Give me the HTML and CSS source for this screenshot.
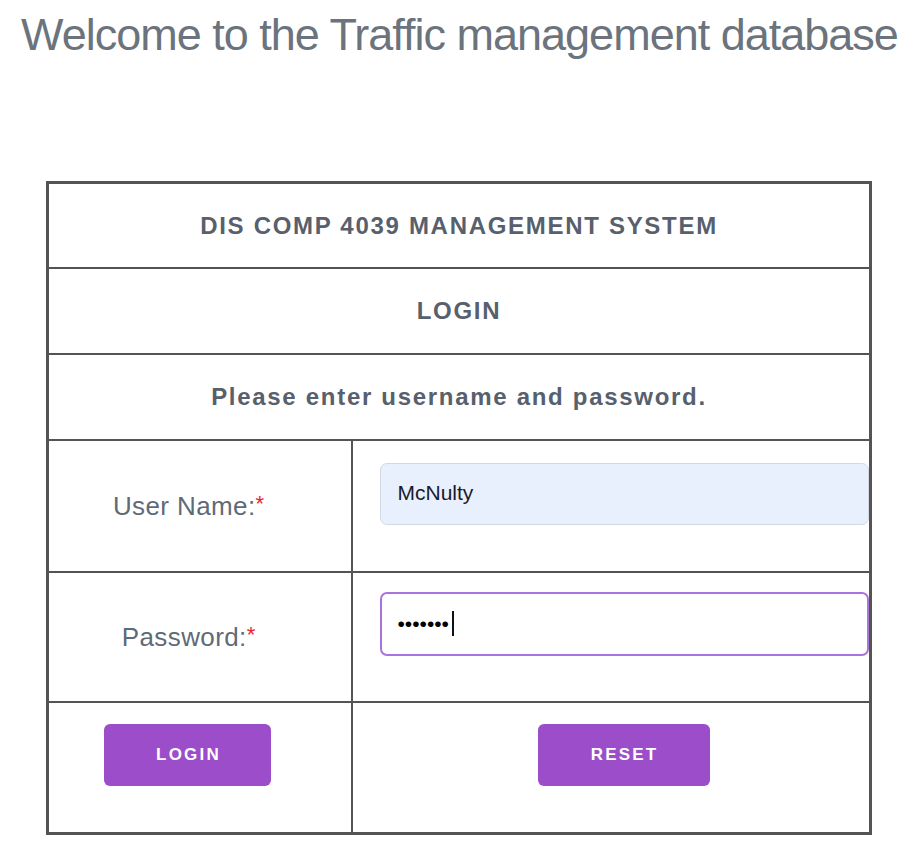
FILE: index.html
```html
<!DOCTYPE html>
<html lang="en">
<head>
<meta charset="utf-8">
<title>Traffic management database</title>
<link rel="stylesheet" href="styles.css">
</head>
<body>
<h1 class="title">Welcome to the Traffic management database</h1>
<form class="login-form">
<table class="login-table">
  <tr class="r1"><td colspan="2" class="head">DIS COMP 4039 MANAGEMENT SYSTEM</td></tr>
  <tr class="r2"><td colspan="2" class="head">LOGIN</td></tr>
  <tr class="r3"><td colspan="2" class="head">Please enter username and password.</td></tr>
  <tr class="field-row">
    <td class="label">User Name:<span class="req">*</span></td>
    <td class="field"><input class="input autofill" type="text" value="McNulty"></td>
  </tr>
  <tr class="field-row pw-row">
    <td class="label">Password:<span class="req">*</span></td>
    <td class="field"><div class="input-wrap"><input class="input focused" type="password" value="McNulty"><span class="caret"></span></div></td>
  </tr>
  <tr class="btn-row">
    <td class="btn-cell left"><button type="button" class="btn">LOGIN</button></td>
    <td class="btn-cell right"><button type="reset" class="btn">RESET</button></td>
  </tr>
</table>
</form>
</body>
</html>
```
FILE: styles.css
```css
html, body {
  margin: 0;
  padding: 0;
  background: #ffffff;
}
body {
  font-family: "Liberation Sans", Arial, sans-serif;
  padding-top: 12px;
}
.title {
  margin: 0 0 124px 21px;
  font-size: 45px;
  line-height: 45px;
  font-weight: normal;
  letter-spacing: -1px;
  color: #6b737d;
  white-space: nowrap;
}
.login-form {
  margin: 0 0 0 46px;
}
.login-table {
  border-collapse: collapse;
  width: 826px;
  border: 3px solid #545454;
}
.login-table td {
  border: 2px solid #545454;
  padding: 0;
}
.head {
  text-align: center;
  vertical-align: middle;
  font-weight: bold;
  font-size: 24px;
  letter-spacing: 1.7px;
  color: #57606c;
}
.r1 .head { height: 83px; }
.r2 .head { height: 84px; }
.r3 .head { height: 84px; }
.label {
  width: 304px;
  height: 132px;
  text-align: center;
  vertical-align: middle;
  font-size: 26px;
  letter-spacing: 0.4px;
  color: #5f6a77;
  padding-right: 22px !important;
  box-sizing: border-box;
}
.pw-row .label { height: 130px; }
.req {
  color: #e8262f;
  font-size: 22px;
  vertical-align: 4px;
}
.field {
  vertical-align: top;
  padding: 22px 0 0 27px !important;
}
.pw-row .field { padding-top: 19px !important; }
.input-wrap {
  position: relative;
}
.input {
  display: block;
  box-sizing: border-box;
  width: 489px;
  height: 62px;
  border-radius: 7px;
  padding: 0 17px 2px;
  font-family: "Liberation Sans", Arial, sans-serif;
  font-size: 21px;
  color: #1a1a2a;
  outline: none;
}
.autofill {
  background: #e8f0fe;
  border: 1px solid #d3d9e2;
}
.focused {
  height: 64px;
  background: #ffffff;
  border: 2px solid #ab72dc;
  font-size: 21px;
  color: #000;
  padding: 0 16px;
}
.caret {
  position: absolute;
  left: 72px;
  top: 19px;
  width: 2px;
  height: 25px;
  background: #111;
}
.btn-cell {
  vertical-align: top;
  height: 108px;
  padding-top: 21px !important;
}
.btn-cell.left { padding-left: 55px !important; }
.btn-cell.right { padding-left: 185px !important; }
.btn {
  display: block;
  border: none;
  border-radius: 6px;
  background: #9b4dca;
  color: #ffffff;
  font-family: "Liberation Sans", Arial, sans-serif;
  font-weight: bold;
  font-size: 17px;
  letter-spacing: 2.2px;
  height: 62px;
  padding: 0 0 0 2px;
}
.btn-cell.left .btn { width: 167px; }
.btn-cell.right .btn { width: 172px; }
```
